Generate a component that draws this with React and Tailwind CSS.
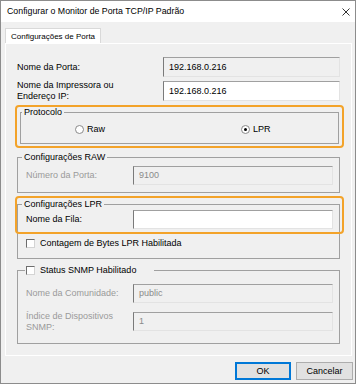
import React from "react";

function Field({ value, muted, white, className = "" }) {
  return (
    <div
      className={`h-[19px] flex items-center pl-[5px] border border-t-[#a0a0a0] border-l-[#7a7a7a] border-r-[#e3e3e3] border-b-[#e3e3e3] ${
        white ? "bg-white text-black" : muted ? "bg-[#f0f0f0] text-[#8a8a8a]" : "bg-[#f0f0f0] text-black"
      } ${className}`}
    >
      {value}
    </div>
  );
}

function Check() {
  return (
    <span className="w-[9px] h-[9px] shrink-0 bg-white border border-t-[#6d6d6d] border-l-[#6d6d6d] border-r-[#d4d4d4] border-b-[#d4d4d4]" />
  );
}

function Radio({ checked }) {
  return (
    <span className="w-[9px] h-[9px] shrink-0 rounded-full bg-white border border-[#8a8a8a] flex items-center justify-center">
      {checked && <span className="w-[3px] h-[3px] rounded-full bg-black" />}
    </span>
  );
}

export default function App() {
  return (
    <div className="w-[358px] h-[385px] bg-white font-['Liberation_Sans',Arial,sans-serif] text-[9px] leading-[11px] text-black">
      <div className="w-[356px] h-[384px] border border-[#8c8c8c] bg-[#f0f0f0] flex flex-col">
        {/* title bar */}
        <div className="h-[21px] shrink-0 bg-white flex items-center justify-between pl-[6px] pr-[5px]">
          <span className="text-[8.8px]">Configurar o Monitor de Porta TCP/IP Padrão</span>
          <svg width="8" height="8" viewBox="0 0 8 8" className="mt-[1px]">
            <path d="M0.5 0.5L7.5 7.5M7.5 0.5L0.5 7.5" stroke="#333" strokeWidth="1" />
          </svg>
        </div>

        <div className="flex-1 pl-[4px] pr-[2px] pt-[6px]">
          <div className="flex">
            <div className="h-[15px] w-[96px] bg-white border border-b-0 border-[#d9d9d9] flex items-center pl-[5px] text-[8px]">
              Configurações de Porta
            </div>
          </div>

          <div className="h-[313px] w-[347px] border border-white px-[11px] pt-[13px]">
            {/* Nome da Porta */}
            <div className="h-[20px] flex items-center">
              <div className="w-[146px]">Nome da Porta:</div>
              <Field value="192.168.0.216" className="flex-1 h-[20px]" />
            </div>

            <div className="h-[22px] flex items-center mt-[3px]">
              <div className="w-[146px]">
                Nome da Impressora ou
                <br />
                Endereço IP:
              </div>
              <Field value="192.168.0.216" white className="flex-1 h-[20px]" />
            </div>

            {/* Protocolo */}
            <div className="mt-[3px] -ml-[2px] -mr-[4px] border-2 border-[#f3a32a] rounded-[4px] px-[3px] pb-[2px]">
              <fieldset className="border border-[#a0a0a0]">
                <legend className="ml-[1px] px-[2px] leading-[11px]">Protocolo</legend>
                <div className="h-[25px] flex items-center pb-[2px] pl-[54px]">
                  <div className="w-[166px] flex items-center gap-[3px]">
                    <Radio />
                    <span>Raw</span>
                  </div>
                  <div className="flex items-center gap-[3px]">
                    <Radio checked />
                    <span>LPR</span>
                  </div>
                </div>
              </fieldset>
            </div>

            {/* RAW */}
            <fieldset className="mt-[4px] border border-[#a0a0a0]">
              <legend className="ml-[4px] px-[2px] leading-[11px]">Configurações RAW</legend>
              <div className="h-[29px] pt-[3px] pl-[8px]">
                <div className="h-[19px] flex items-center">
                  <div className="w-[107px] text-[#9a9a9a]">Número da Porta:</div>
                  <Field value="9100" muted className="w-[200px]" />
                </div>
              </div>
            </fieldset>

            {/* LPR */}
            <div className="relative mt-[6px]">
              <fieldset className="border border-[#a0a0a0]">
                <legend className="ml-[4px] px-[2px] leading-[11px]">Configurações LPR</legend>
                <div className="pl-[8px] pb-[9px]">
                  <div className="h-[19px] flex items-center">
                    <div className="w-[107px]">Nome da Fila:</div>
                    <Field value="" white className="w-[200px]" />
                  </div>
                  <div className="mt-[9px] h-[11px] flex items-center gap-[5px]">
                    <Check />
                    <span>Contagem de Bytes LPR Habilitada</span>
                  </div>
                </div>
              </fieldset>
              <div className="absolute -top-[3px] -left-[2px] -right-[4px] h-[38px] border-2 border-[#f3a32a] rounded-[4px] pointer-events-none" />
            </div>

            {/* SNMP */}
            <fieldset className="mt-[6px] border border-[#a0a0a0]">
              <legend className="ml-[7px] pl-[1px] pr-[18px] leading-[11px] h-[11px] flex items-center gap-[5px]">
                <Check />
                <span>Status SNMP Habilitado</span>
              </legend>
              <div className="pl-[8px] pt-[8px] pb-[12px]">
                <div className="h-[19px] flex items-center">
                  <div className="w-[107px] text-[#9a9a9a]">Nome da Comunidade:</div>
                  <Field value="public" muted className="w-[200px]" />
                </div>
                <div className="mt-[9px] h-[19px] flex items-center">
                  <div className="w-[107px] text-[#9a9a9a]">
                    Índice de Dispositivos
                    <br />
                    SNMP:
                  </div>
                  <Field value="1" muted className="w-[200px]" />
                </div>
              </div>
            </fieldset>
          </div>

          {/* buttons */}
          <div className="mt-[6px] flex justify-end gap-[5px]">
            <button className="w-[56px] h-[18px] bg-[#e1e1e1] border border-[#0078d7] shadow-[inset_0_0_0_1px_#0078d7] text-[9px] leading-[11px]">
              OK
            </button>
            <button className="w-[57px] h-[18px] bg-[#e1e1e1] border border-[#adadad] text-[9px] leading-[11px]">
              Cancelar
            </button>
          </div>
        </div>
      </div>
    </div>
  );
}
